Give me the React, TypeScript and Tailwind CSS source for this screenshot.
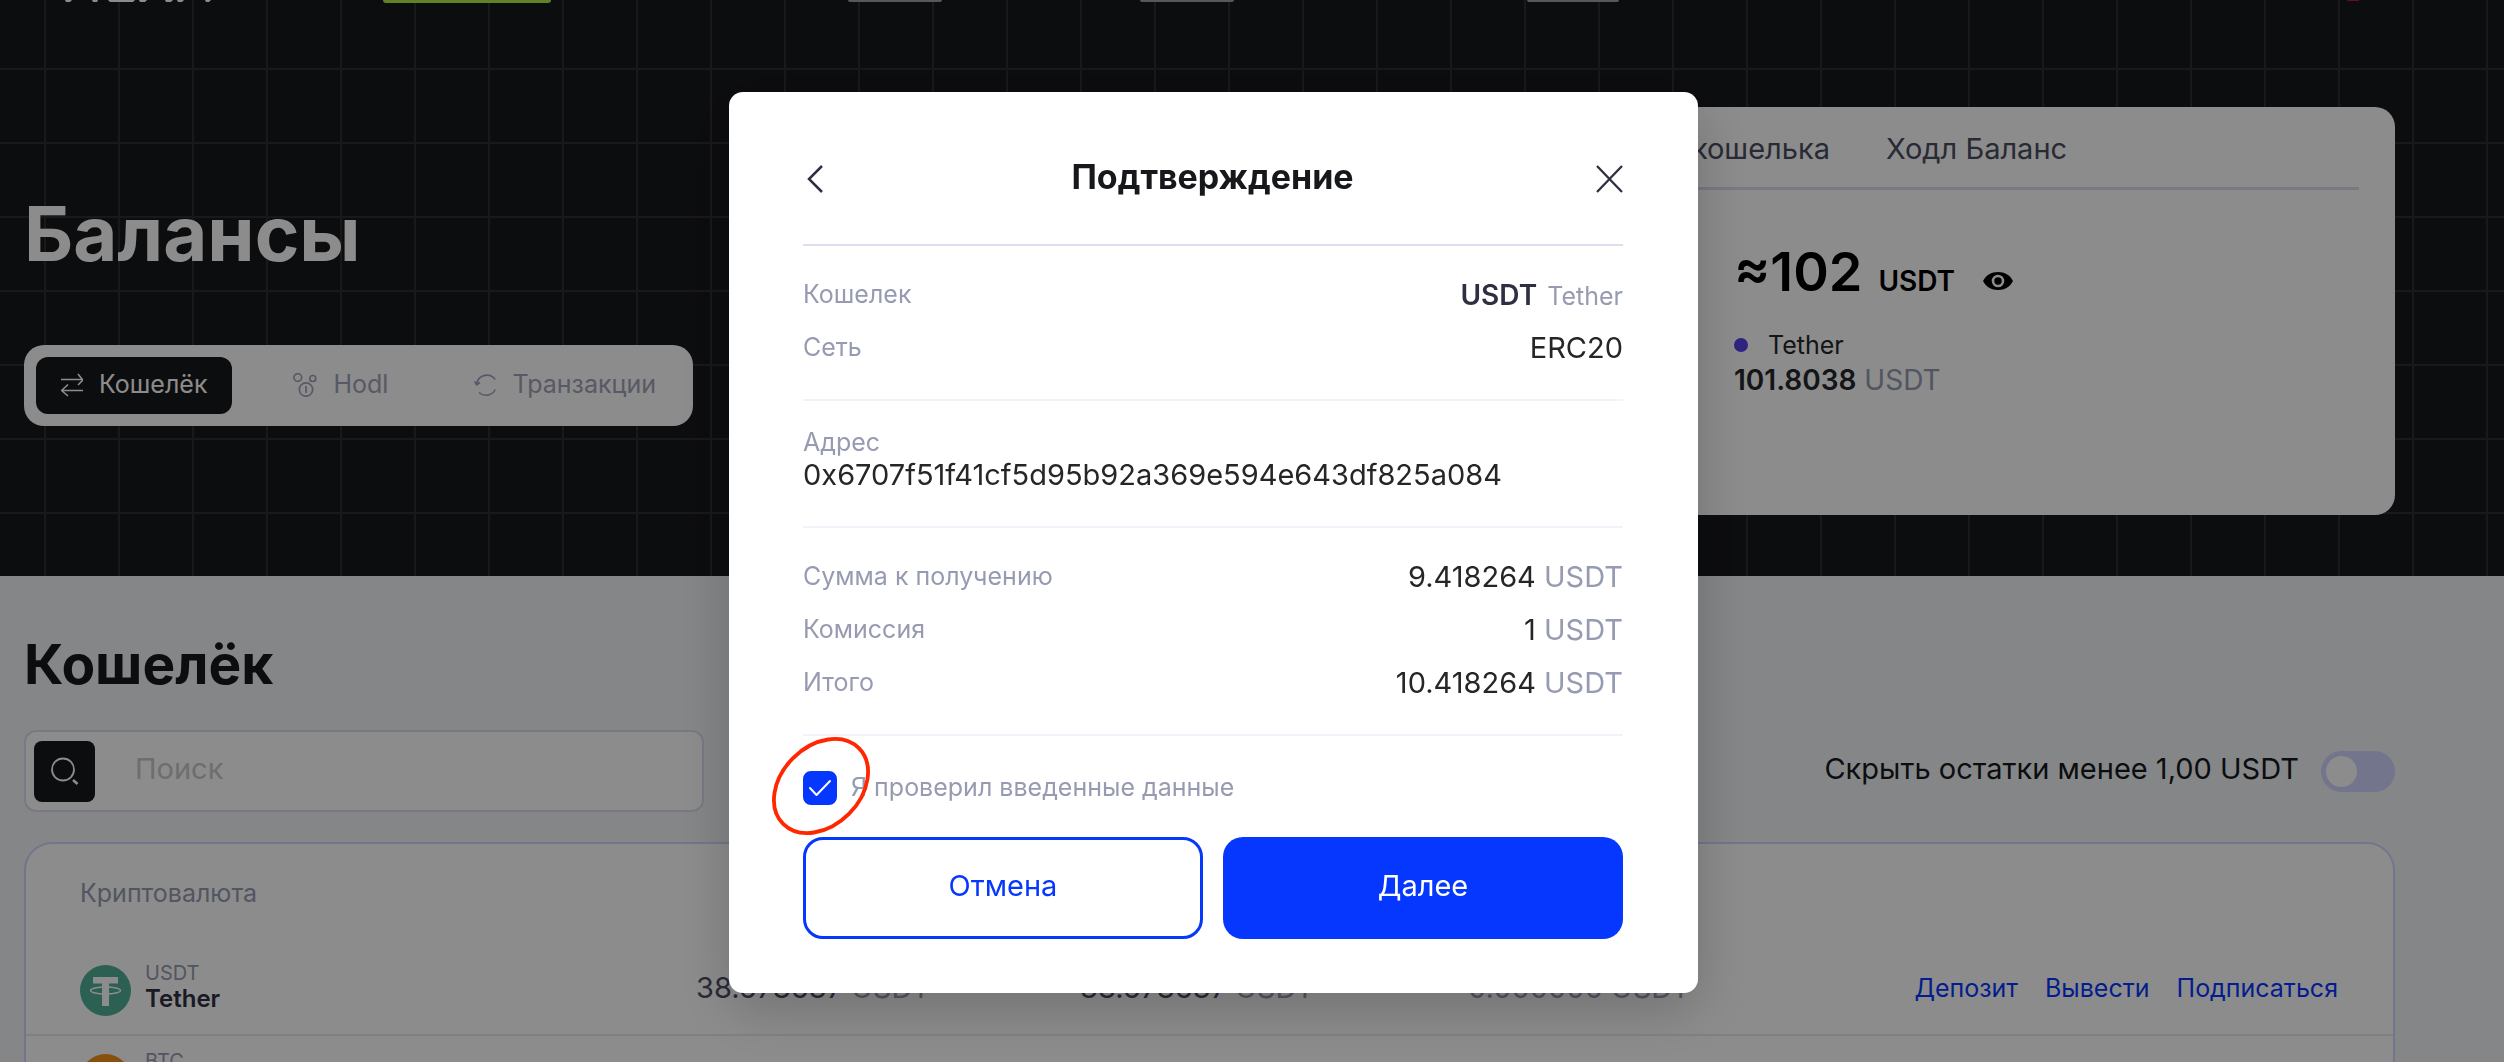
import type { ReactNode } from 'react'

const tabs = [
  { label: 'Кошелёк', icon: <SwapIcon />, active: true },
  { label: 'Hodl', icon: <HodlIcon />, active: false },
  { label: 'Транзакции', icon: <HistoryIcon />, active: false },
]

const coins = [
  {
    code: 'USDT',
    name: 'Tether',
    icon: <TetherIcon />,
    total: '38.678637',
    available: '38.678637',
    frozen: '0.000000',
  },
  {
    code: 'BTC',
    name: 'Bitcoin',
    icon: <BitcoinIcon />,
    total: '0.000000',
    available: '0.000000',
    frozen: '0.000000',
  },
]

function SwapIcon() {
  return (
    <svg className="h-6 w-[22px]" viewBox="0 0 22 24" fill="none" stroke="currentColor" strokeWidth="1.6" aria-hidden={true}>
      <path d="M0 6.5h21M17 1l4.4 5.5v1L17 12M22 17.5H1M7 11.500L.6 17.500 7 23" />
    </svg>
  )
}

function HodlIcon() {
  return (
    <svg className="h-6 w-6" viewBox="0 0 24 24" fill="none" stroke="currentColor" strokeWidth="1.7" aria-hidden={true}>
      <circle cx="4.800" cy="4.500" r="3.900" />
      <circle cx="19.800" cy="5.500" r="3" />
      <circle cx="13" cy="16.500" r="6.700" />
      <path d="M13 13v7" />
    </svg>
  )
}

function HistoryIcon() {
  return (
    <svg className="h-6 w-[22px]" viewBox="0 0 22 24" fill="none" stroke="currentColor" strokeWidth="1.6" aria-hidden={true}>
      <path d="M2.800 10.500A10.200 10.200 0 0 1 21.200 6.500M21.200 16.500A10.200 10.200 0 0 1 5 19.500" />
      <path d="M.6 8.500l2 3.300 3.400-2.300" fill="currentColor" />
    </svg>
  )
}

function SearchIcon() {
  return (
    <svg className="h-7 w-7" viewBox="0 0 28 28" fill="none" stroke="currentColor" strokeWidth="1.800" aria-hidden={true}>
      <circle cx="12" cy="12.500" r="11" />
      <path d="M22 23l4.500 4" strokeWidth="2.600" />
    </svg>
  )
}

function EyeIcon() {
  return (
    <svg className="h-5 w-[30px]" viewBox="0 0 30 20" aria-hidden={true}>
      <path d="M0 10C3 4 8.500 1 15 1s12 3 15 9c-3 6-8.500 9-15 9S3 16 0 10z" fill="#000" />
      <circle cx="15" cy="10" r="5" fill="none" stroke="#fff" strokeWidth="2.600" />
    </svg>
  )
}

function TetherIcon() {
  return (
    <svg className="h-[51px] w-[51px]" viewBox="0 0 51 51" aria-hidden={true}>
      <circle cx="25.500" cy="25.500" r="25.500" fill="#50af95" />
      <path d="M13 12h25v6.500h-9V41h-7V18.500h-9z" fill="#fff" />
      <ellipse cx="25.500" cy="25.500" rx="15" ry="3.600" fill="none" stroke="#fff" strokeWidth="1.500" />
    </svg>
  )
}

function BitcoinIcon() {
  return (
    <svg className="h-[51px] w-[51px]" viewBox="0 0 51 51" aria-hidden={true}>
      <circle cx="25.500" cy="25.500" r="25.500" fill="#f7931a" />
      <path
        d="M22 9v6m6-6v6m-6 21v6m6-6v6M17 15h12a5 5 0 0 1 0 10h-9m0 0h10a5.500 5.500 0 0 1 0 11H17m4-21v21"
        fill="none"
        stroke="#fff"
        strokeWidth="3"
      />
    </svg>
  )
}

function TopNav() {
  return (
    <nav className="flex h-[3px] items-start" aria-label="Меню">
      <svg className="ml-[65px] h-[3px] w-[146px]" viewBox="0 0 146 3" fill="#fff" aria-hidden={true}>
        <path d="M0 0h7L5 2H1zM27 0h6l-1 2h-4zM43 0h27l-2 2H45zM74 0h8l-2 2h-5zM100 0h8l-2 2h-5zM112 0h7l-2 2h-4zM140 0h6l-2 2h-3z" />
      </svg>
      <span className="ml-[172px] h-[3px] w-[168px] rounded-b-[3px] bg-[#b1ec44]" />
      <span className="ml-[297px] h-[2px] w-[94px] rounded-b-sm bg-[#a0a0a4]" />
      <span className="ml-[198px] h-[2px] w-[94px] rounded-b-sm bg-[#a0a0a4]" />
      <span className="ml-[293px] h-[2px] w-[92px] rounded-b-sm bg-[#a0a0a4]" />
      <span className="ml-auto mr-[145px] h-px w-3 rounded-b bg-[#d3122e]" />
    </nav>
  )
}

function BalanceCard() {
  return (
    <div className="min-h-[408px] w-[1196px] rounded-[20px] bg-white px-9">
      <div className="flex h-[83px] items-center gap-14 border-b-[3px] border-[#dcdcf0] pt-1 text-[29px] text-[#4a4d62]">
        <button className="w-[595px] text-right">Баланс кошелька</button>
        <button>Ходл Баланс</button>
      </div>
      <div className="pt-[50px] pl-[499px]">
        <div className="flex items-baseline text-black">
          <span className="text-[54px] leading-16 font-semibold">≈102</span>
          <span className="ml-4 text-[28px] font-semibold">USDT</span>
          <button className="ml-7" aria-label="Скрыть баланс">
            <EyeIcon />
          </button>
        </div>
        <div className="mt-6 flex items-center gap-5 text-[25px] leading-[34px] text-[#26272b]">
          <span className="h-3.5 w-3.5 rounded-full bg-[#5640ec]" />
          Tether
        </div>
        <p className="text-[28px] leading-9 text-[#969bb2]">
          <span className="font-semibold text-[#26272b]">101.8038</span> USDT
        </p>
      </div>
    </div>
  )
}

function Hero() {
  return (
    <header className="bg-[#17181c] bg-[linear-gradient(to_right,#2d2e32_2px,transparent_2px),linear-gradient(to_bottom,#2d2e32_2px,transparent_2px)] bg-size-[74px_74px] bg-position-[44px_68px]">
      <TopNav />
      <div className="flex items-start justify-between pt-[104px] pr-[109px] pb-[61px] pl-6">
        <div>
          <h1 className="mt-[86px] text-[76px] leading-20 font-bold text-white">Балансы</h1>
          <div className="mt-[72px] flex h-[81px] w-[669px] justify-between rounded-[20px] bg-white p-3">
            {tabs.map(({ label, icon, active }) => (
              <button
                key={label}
                className={
                  active
                    ? 'flex items-center gap-4 rounded-xl bg-[#17181c] px-[25px] pb-0.5 text-[25px] text-white'
                    : 'flex items-center gap-4 px-[25px] pb-0.5 text-[25px] text-[#a0a3b8]'
                }
              >
                {icon}
                {label}
              </button>
            ))}
          </div>
        </div>
        <BalanceCard />
      </div>
    </header>
  )
}

function Wallet() {
  return (
    <main className="bg-[#f2f4f7] pt-14 pr-[109px] pl-6">
      <h2 className="text-[55px] leading-16 font-bold text-[#17181c]">Кошелёк</h2>
      <div className="mt-[34px] flex items-center justify-between">
        <div className="flex h-[82px] w-[680px] items-center rounded-xl border-2 border-[#dcdcf0] bg-white pl-2">
          <button
            className="flex h-[61px] w-[61px] shrink-0 items-center justify-center rounded-lg bg-[#17181c] text-white"
            aria-label="Найти"
          >
            <SearchIcon />
          </button>
          <input
            className="ml-10 w-full pb-1 text-[29px] outline-none placeholder:text-[#c8c8c8]"
            type="text"
            placeholder="Поиск"
            aria-label="Поиск"
          />
        </div>
        <div className="flex items-center gap-[22px]">
          <label htmlFor="hide-small" className="pb-1 text-[29px] text-[#17181c]">
            Скрыть остатки менее 1,00 USDT
          </label>
          <input
            id="hide-small"
            type="checkbox"
            role="switch"
            className="flex h-[41px] w-[74px] appearance-none items-center rounded-full bg-[#d0d5ff] pl-[5px] before:h-[31px] before:w-[31px] before:rounded-full before:bg-white"
          />
        </div>
      </div>
      <div className="mt-[30px] overflow-hidden rounded-t-[28px] border-2 border-b-0 border-[#d0d5ff] bg-white">
        <table className="w-full table-fixed text-left">
          <thead>
            <tr className="h-[103px] text-[25px] text-[#969bb2]">
              <th className="w-[670px] pb-1 pl-[54px] font-normal">Криптовалюта</th>
              <th className="w-[384px]" />
              <th className="w-[388px]" />
              <th />
              <th />
            </tr>
          </thead>
          <tbody>
            {coins.map((coin) => (
              <tr key={coin.code} className="h-[88px] border-b-2 border-[#eaeaee] text-[29px] text-[#4a4d62]">
                <td className="pl-[54px]">
                  <div className="flex items-center gap-3.5">
                    {coin.icon}
                    <div className="pb-2.5 text-2xl leading-[26px] font-semibold text-[#2e3042]">
                      <p className="text-xl leading-[26px] font-normal text-[#969bb2]">{coin.code}</p>
                      {coin.name}
                    </div>
                  </div>
                </td>
                <td className="pb-1.5">
                  {coin.total} <span className="text-[#969bb2]">{coin.code}</span>
                </td>
                <td className="pb-1.5">
                  {coin.available} <span className="text-[#969bb2]">{coin.code}</span>
                </td>
                <td className="pb-1.5 text-[#969bb2]">
                  {coin.frozen} {coin.code}
                </td>
                <td className="pr-[55px] pb-1">
                  <div className="flex justify-end gap-[27px] text-[25px] text-[#0637ff]">
                    <a href="#deposit">Депозит</a>
                    <a href="#withdraw">Вывести</a>
                    <a href="#subscribe">Подписаться</a>
                  </div>
                </td>
              </tr>
            ))}
          </tbody>
        </table>
      </div>
    </main>
  )
}

interface RowProps {
  label: string
  children: ReactNode
}

function Row({ label, children }: RowProps) {
  return (
    <div className="flex h-[53px] items-center justify-between">
      <dt className="text-[25px] text-[#969bb2]">{label}</dt>
      <dd className="text-[29px] text-[#262626]">{children}</dd>
    </div>
  )
}

function Amount({ value }: { value: string }) {
  return (
    <>
      {value} <span className="text-[#969bb2]">USDT</span>
    </>
  )
}

function ConfirmDialog() {
  return (
    <div
      role="dialog"
      aria-labelledby="confirm-title"
      className="w-[969px] rounded-[14px] bg-white pt-12 pr-[75px] pb-[54px] pl-[74px] shadow-[0_16px_56px_rgba(0,0,0,0.2)]"
    >
      <div className="flex h-[106px] items-center justify-between border-b-2 border-[#dcdfee] pb-[26px] text-[#2e3042]">
        <button className="w-[26px] pl-1" aria-label="Назад">
          <svg className="h-7 w-4" viewBox="0 0 16 28" fill="none" stroke="currentColor" strokeWidth="2.500" aria-hidden={true}>
            <path d="M15 1L2 14l13 13" />
          </svg>
        </button>
        <h2 id="confirm-title" className="pb-1.5 text-[34px] font-bold text-[#17181c]">
          Подтверждение
        </h2>
        <button aria-label="Закрыть">
          <svg className="h-7 w-[27px]" viewBox="0 0 27 28" fill="none" stroke="currentColor" strokeWidth="2.300" aria-hidden={true}>
            <path d="M1 1l25 26M26 1L1 27" />
          </svg>
        </button>
      </div>
      <dl>
        <div className="border-b-2 border-[#f2f3fa] pt-[22px] pb-[25px]">
          <Row label="Кошелек">
            <span className="text-[28px] font-semibold text-[#2e3042]">USDT</span>{' '}
            <span className="ml-0.5 text-[25px] text-[#969bb2]">Tether</span>
          </Row>
          <Row label="Сеть">ERC20</Row>
        </div>
        <div className="border-b-2 border-[#f2f3fa] pt-[25px] pb-[34px]">
          <dt className="text-[25px] leading-8 text-[#969bb2]">Адрес</dt>
          <dd className="text-[29px] leading-[34px] text-[#262626]">0x6707f51f41cf5d95b92a369e594e643df825a084</dd>
        </div>
        <div className="border-b-2 border-[#f2f3fa] pt-[22px] pb-[25px]">
          <Row label="Сумма к получению">
            <Amount value="9.418264" />
          </Row>
          <Row label="Комиссия">
            <Amount value="1" />
          </Row>
          <Row label="Итого">
            <Amount value="10.418264" />
          </Row>
        </div>
      </dl>
      <label className="relative mt-[35px] flex h-[34px] items-center gap-3.5 text-[25px] text-[#969bb2]">
        <span className="grid">
          <input
            type="checkbox"
            defaultChecked
            className="peer col-start-1 row-start-1 h-[34px] w-[34px] appearance-none rounded-lg border-2 border-[#0637ff] checked:bg-[#0637ff]"
          />
          <svg
            className="pointer-events-none invisible col-start-1 row-start-1 h-[34px] w-[34px] peer-checked:visible"
            viewBox="0 0 34 34"
            fill="none"
            stroke="#fff"
            strokeWidth="2"
            strokeLinecap="round"
            strokeLinejoin="round"
            aria-hidden={true}
          >
            <path d="M7 17l6.500 7L27 10" />
          </svg>
        </span>
        Я проверил введенные данные
        {/* red marker around the tick box */}
        <svg
          className="pointer-events-none absolute -top-[35px] -left-8 h-[100px] w-[100px]"
          viewBox="0 0 100 100"
          fill="none"
          aria-hidden={true}
        >
          <ellipse cx="50" cy="50" rx="53.500" ry="39.500" transform="rotate(-45 50 50)" stroke="#ff2600" strokeWidth="3.800" />
        </svg>
      </label>
      <div className="mt-8 grid grid-cols-2 gap-5 text-[29px]">
        <button className="h-[102px] rounded-[20px] border-[3px] border-[#0637ff] pb-1 text-[#0637ff]">Отмена</button>
        <button className="h-[102px] rounded-[20px] bg-[#0637ff] pb-1 text-white">Далее</button>
      </div>
    </div>
  )
}

export default function App() {
  return (
    <div className="h-screen overflow-hidden bg-[#f2f4f7] font-['Inter','Liberation_Sans',sans-serif] antialiased">
      <Hero />
      <Wallet />
      <div className="fixed inset-0 flex items-start justify-center overflow-hidden bg-black/45 pt-[92px] pr-[77px]">
        <ConfirmDialog />
      </div>
    </div>
  )
}
